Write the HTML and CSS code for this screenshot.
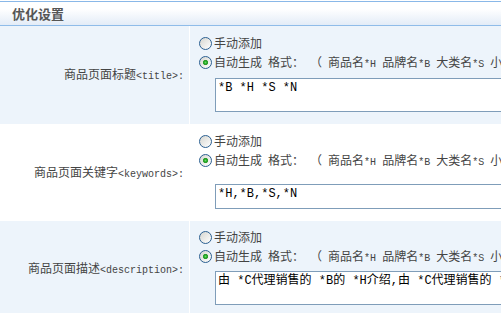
FILE: index.html
```html
<!DOCTYPE html>
<html lang="zh-CN">
<head>
    <meta charset="UTF-8">
    <meta name="viewport" content="width=device-width, initial-scale=1.0">
    <title>优化设置</title>
    <link rel="stylesheet" href="styles.css">
</head>
<body>
    <div class="panel">
        <div class="panel-head">
            <h2>优化设置</h2>
        </div>

        <div class="form-row alt">
            <div class="form-label"><span class="label-text"><span class="zh">商品页面标题</span>&lt;title&gt;:</span></div>
            <div class="form-field">
                <label class="choice"><input type="radio" name="title_mode"><span class="choice-text"><span class="zh">手动添加</span></span></label>
                <label class="choice"><input type="radio" name="title_mode" checked><span class="choice-text"><span class="zh">自动生成</span> <span class="zh">格式：</span> <span class="zh">（</span> <span class="zh">商品名</span>*H <span class="zh">品牌名</span>*B <span class="zh">大类名</span>*S <span class="zh">小类名</span>*N <span class="zh">商家名</span>*C <span class="zh">）</span></span></label>
                <textarea class="field-text row-one">*B *H *S *N</textarea>
            </div>
        </div>

        <div class="form-row">
            <div class="form-label"><span class="label-text"><span class="zh">商品页面关键字</span>&lt;keywords&gt;:</span></div>
            <div class="form-field">
                <label class="choice"><input type="radio" name="kw_mode"><span class="choice-text"><span class="zh">手动添加</span></span></label>
                <label class="choice"><input type="radio" name="kw_mode" checked><span class="choice-text"><span class="zh">自动生成</span> <span class="zh">格式：</span> <span class="zh">（</span> <span class="zh">商品名</span>*H <span class="zh">品牌名</span>*B <span class="zh">大类名</span>*S <span class="zh">小类名</span>*N <span class="zh">商家名</span>*C <span class="zh">）</span></span></label>
                <textarea class="field-text row-two">*H,*B,*S,*N</textarea>
            </div>
        </div>

        <div class="form-row alt">
            <div class="form-label"><span class="label-text"><span class="zh">商品页面描述</span>&lt;description&gt;:</span></div>
            <div class="form-field row-three-field">
                <label class="choice"><input type="radio" name="desc_mode"><span class="choice-text"><span class="zh">手动添加</span></span></label>
                <label class="choice"><input type="radio" name="desc_mode" checked><span class="choice-text"><span class="zh">自动生成</span> <span class="zh">格式：</span> <span class="zh">（</span> <span class="zh">商品名</span>*H <span class="zh">品牌名</span>*B <span class="zh">大类名</span>*S <span class="zh">小类名</span>*N <span class="zh">商家名</span>*C <span class="zh">）</span></span></label>
                <textarea class="field-text row-three">由 *C代理销售的 *B的 *H介绍,由 *C代理销售的 *B的 *H</textarea>
            </div>
        </div>
    </div>
</body>
</html>
```

FILE: styles.css
```css
html, body{
    overflow: hidden;
}
body{
    margin: 0;
    padding-top: 1px;
    background-color: #fff;
    color: #444;
    font-family: "Liberation Mono", "Noto Sans CJK SC", monospace;
    font-size: 10px;
}
.zh{
    font-family: "Noto Sans CJK SC", sans-serif;
    font-size: 12px;
}
.panel-head{
    height: 23px;
    border-top: 1px solid #8ab8e8;
    border-bottom: 1px solid #8fbce9;
    background: linear-gradient(#fff, #fff 30%, #e3ecf7);
    display: flex;
    align-items: center;
    padding-left: 12px;
}
.panel-head h2{
    margin: 0;
    font-family: "Noto Sans CJK SC", sans-serif;
    font-size: 13px;
    font-weight: bold;
    color: #555;
}
.form-row{
    display: grid;
    grid-template-columns: 189px 1fr;
    column-gap: 1px;
}
.form-row.alt .form-label,
.form-row.alt .form-field{
    background-color: #edf4fb;
}
.form-label{
    display: flex;
    align-items: center;
    justify-content: flex-end;
    padding-right: 5px;
    white-space: nowrap;
}
.label-text{
    line-height: 19px;
}
.form-field{
    display: flex;
    flex-direction: column;
    padding: 8px 0 12px 9px;
    overflow: hidden;
}
.row-three-field{
    padding-top: 7px;
}
.choice{
    display: flex;
    align-items: center;
    height: 19px;
}
.choice-text{
    white-space: pre;
    line-height: 19px;
}
.choice input{
    appearance: none;
    width: 13px;
    height: 13px;
    margin: 0 2px 0 0;
    border: 1px solid #2b5f91;
    border-radius: 50%;
    background: linear-gradient(135deg, #d6d6d0, #fff);
    box-sizing: border-box;
    flex-shrink: 0;
}
.choice input:checked{
    background: radial-gradient(circle, #6ad86a 0, #22a822 1.5px, #2a9a2a 2.2px, transparent 3px), linear-gradient(135deg, #d6d6d0, #fff);
}
.field-text{
    box-sizing: border-box;
    width: 460px;
    margin-left: 16px;
    padding: 2px;
    border: 1px solid #7f9db9;
    background: #fff;
    color: #000;
    font-family: "Liberation Mono", "Noto Sans CJK SC", monospace;
    font-size: 12px;
    line-height: 14px;
    resize: none;
    overflow: hidden;
}
.row-one{
    height: 34px;
    margin-top: 6px;
}
.row-two{
    height: 25px;
    margin-top: 14px;
}
.row-three{
    height: 34px;
    margin-top: 5px;
}
```
